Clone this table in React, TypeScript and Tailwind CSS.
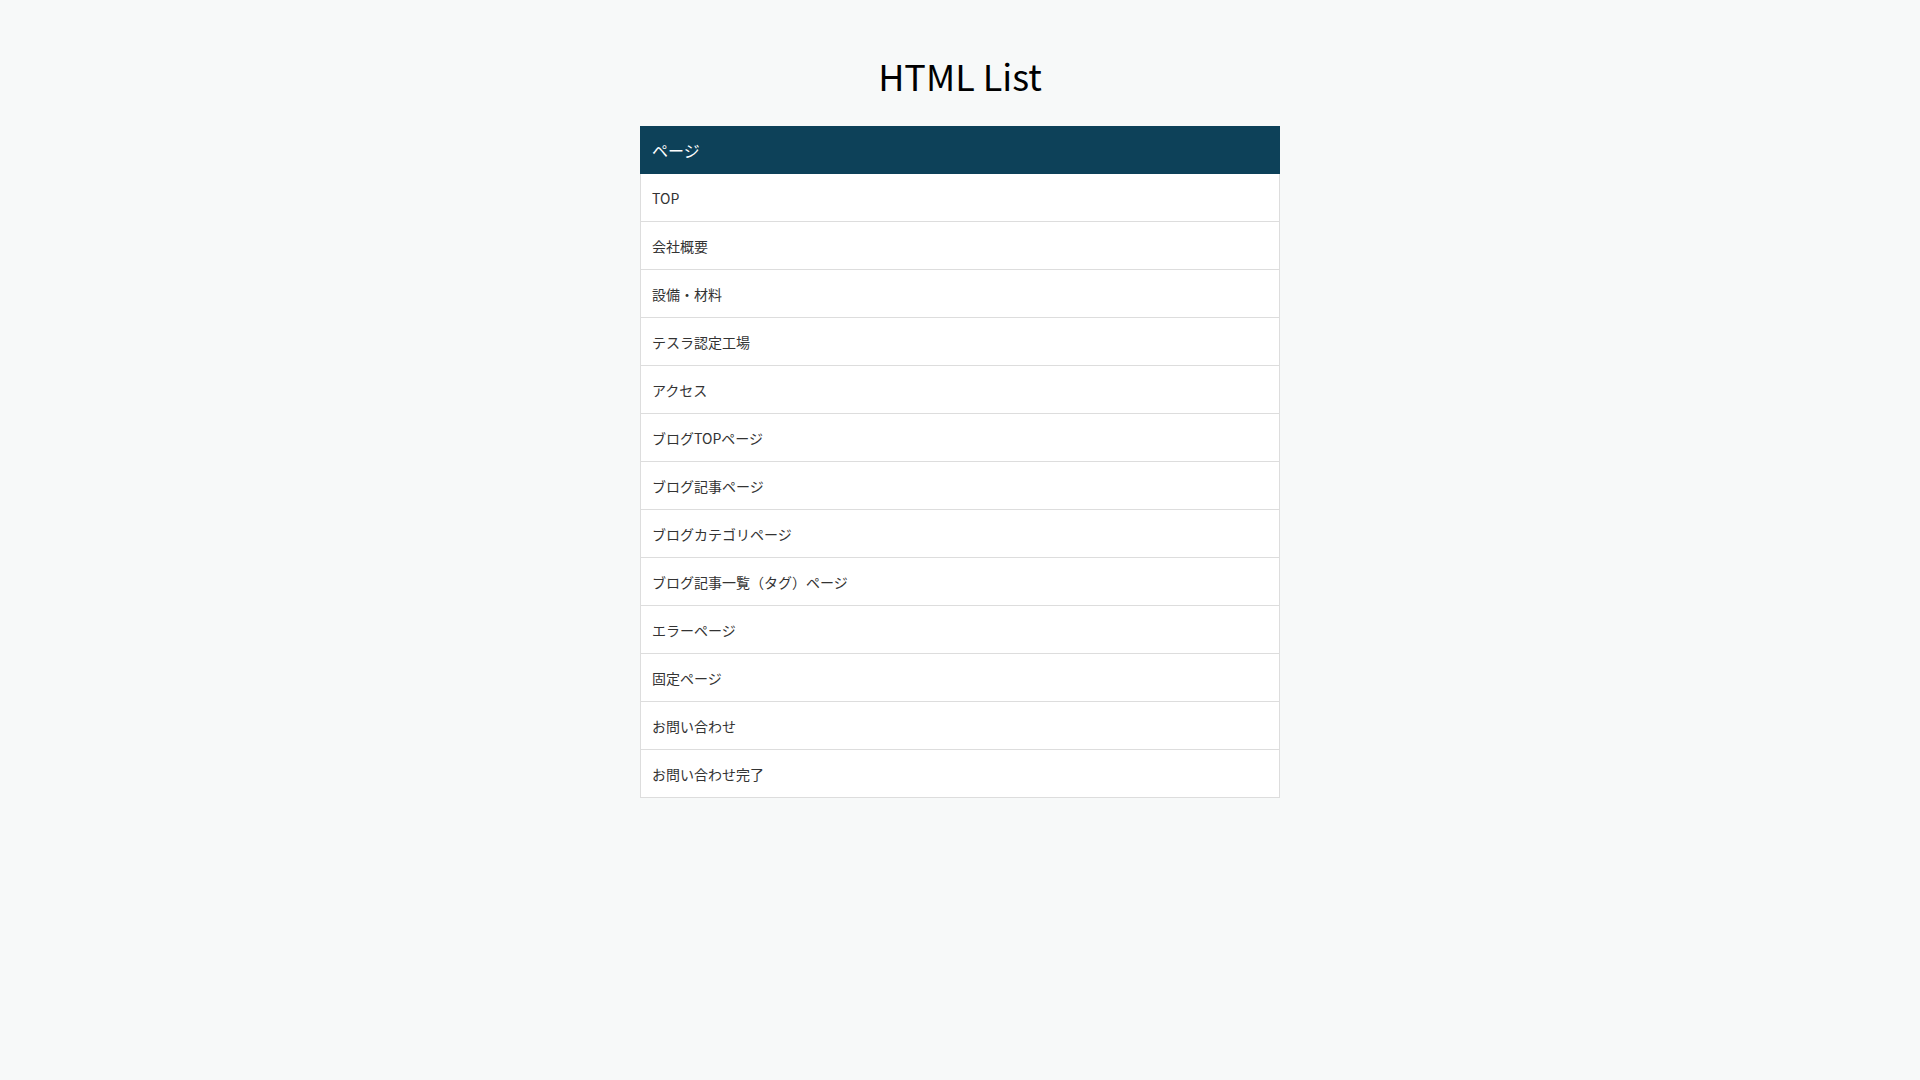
import React from "react";

const pages = [
  "TOP",
  "会社概要",
  "設備・材料",
  "テスラ認定工場",
  "アクセス",
  "ブログTOPページ",
  "ブログ記事ページ",
  "ブログカテゴリページ",
  "ブログ記事一覧（タグ）ページ",
  "エラーページ",
  "固定ページ",
  "お問い合わせ",
  "お問い合わせ完了",
];

export default function App() {
  return (
    <div
      className="min-h-screen bg-[#f7f9f9] pt-[48px] text-[#333]"
      style={{ fontFamily: '"Noto Sans CJK JP", "Noto Sans", sans-serif' }}
    >
      <h1 className="text-center text-[36px] leading-[54px] font-normal text-black">HTML List</h1>
      <div className="mx-auto mt-[24px] w-[640px]">
        <div className="flex h-[48px] items-center bg-[#0d4159] px-3 text-[16px] text-white">ページ</div>
        {pages.map((p) => (
          <div
            key={p}
            className="flex h-[48px] items-center border border-t-0 border-[#dddddd] bg-white pl-[11px] pr-3 pt-[2px] text-[14px] text-[#333]"
          >
            {p}
          </div>
        ))}
      </div>
    </div>
  );
}
